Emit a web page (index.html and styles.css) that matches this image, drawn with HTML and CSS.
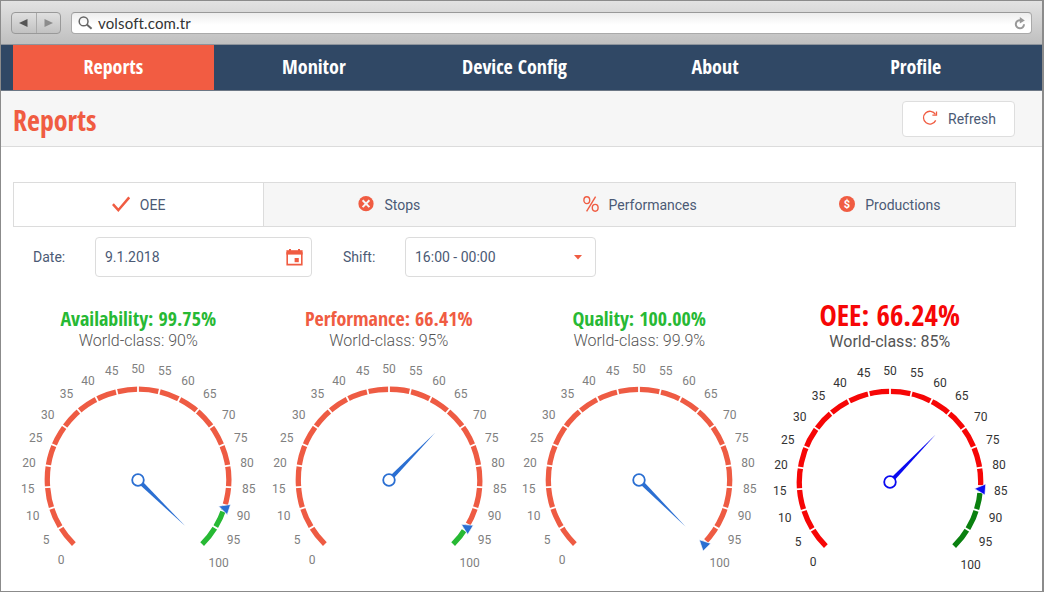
FILE: index.html
```
<!DOCTYPE html>
<html lang="en">
<head>
    <meta charset="UTF-8">
    <title>Reports</title>
    <meta name="viewport" content="width=device-width, initial-scale=1">
    <link rel="stylesheet" href="styles.css">
</head>

<body>
<div class="window">
    <div class="browser-bar">
        <div class="history">
            <span class="history-button"><svg width="9" height="8" viewBox="0 0 9 8"><path d="M0 4L8.5 0V8Z" fill="#555"/></svg></span>
            <span class="history-button"><svg width="9" height="8" viewBox="0 0 9 8"><path d="M9 4L0.5 0V8Z" fill="#8c8c8c"/></svg></span>
        </div>
        <div class="address">
            <svg width="15" height="15" viewBox="0 0 15 15" fill="none" stroke="#666"><circle cx="5.6" cy="5.4" r="4.4" stroke-width="1.5"/><path d="M8.8 8.6L13.6 12.8" stroke-width="2"/></svg>
            <span class="address-text">volsoft.com.tr</span>
            <svg class="reload" width="12" height="13" viewBox="0 0 12 13"><path d="M6.5 3.2A4.1 4.1 0 1 0 10 7.2" fill="none" stroke="#999" stroke-width="2"/><path d="M5.8 0L10.8 3.6L5.8 6.6Z" fill="#999"/></svg>
        </div>
    </div>

    <nav class="main-menu">
        <a class="menu-item active"><span class="condensed">Reports</span></a>
        <a class="menu-item"><span class="condensed">Monitor</span></a>
        <a class="menu-item"><span class="condensed">Device Config</span></a>
        <a class="menu-item"><span class="condensed">About</span></a>
        <a class="menu-item"><span class="condensed">Profile</span></a>
    </nav>

    <header class="page-header">
        <h1 class="condensed">Reports</h1>
        <button type="button" class="refresh">
            <svg width="16" height="16" viewBox="0 0 16 16" fill="none" stroke="#f05c42" stroke-width="1.3"><path d="M13.7 10.4A6.4 6.4 0 1 1 13.4 4.4"/><path d="M14.5 1.6V5.2H10.4"/></svg>
            Refresh
        </button>
    </header>

    <div class="tabs">
        <a class="tab selected">
            <svg width="18" height="18" viewBox="0 0 18 18" fill="none" stroke="#f05c42" stroke-width="2.5"><path d="M0.9 8.2L6.3 14.2L17.2 1.4"/></svg>
            OEE
        </a>
        <a class="tab">
            <svg width="16" height="18" viewBox="0 0 16 18"><circle cx="8" cy="7.7" r="7.6" fill="#f05c42"/><path d="M4.6 4.3L11.4 11.1M11.4 4.3L4.6 11.1" stroke="#f6f6f6" stroke-width="2"/></svg>
            Stops
        </a>
        <a class="tab">
            <svg width="16" height="18" viewBox="0 0 16 18" fill="none" stroke="#f05c42" stroke-width="1.4"><ellipse cx="3.8" cy="4.2" rx="2.9" ry="3.4"/><ellipse cx="12.2" cy="11.8" rx="2.9" ry="3.4"/><path d="M12.6 0.6L3.6 15.4"/></svg>
            Performances
        </a>
        <a class="tab">
            <svg width="16" height="18" viewBox="0 0 16 18"><circle cx="8" cy="8" r="8" fill="#f05c42"/><text class="coin" x="8" y="12" text-anchor="middle">$</text></svg>
            Productions
        </a>
    </div>

    <div class="filters">
        <label class="date-label">Date:</label>
        <div class="field date">
            9.1.2018
            <svg width="17" height="17" viewBox="0 0 17 17"><path d="M1.2 4H15.8V15.6H1.2Z" fill="none" stroke="#f05c42" stroke-width="1.6"/><path d="M0.4 1.2H16.6V5.6H0.4Z" fill="#f05c42"/><path d="M3 0H5V2H3ZM12 0H14V2H12Z" fill="#f05c42"/><path d="M8.6 9H12.8V13.2H8.6Z" fill="#f05c42"/></svg>
        </div>
        <label class="shift-label">Shift:</label>
        <div class="field shift">
            16:00 - 00:00
            <svg width="8" height="5" viewBox="0 0 8 5"><path d="M0 0H8L4 4.5Z" fill="#f05c42"/></svg>
        </div>
    </div>

    <div class="gauges">
        <div class="gauge">
            <h2 class="condensed good">Availability: 99.75%</h2>
            <p>World-class: 90%</p>
            <svg class="dial" data-value="99.75" data-target="90"></svg>
        </div>
        <div class="gauge">
            <h2 class="condensed bad">Performance: 66.41%</h2>
            <p>World-class: 95%</p>
            <svg class="dial" data-value="66.41" data-target="95"></svg>
        </div>
        <div class="gauge">
            <h2 class="condensed good">Quality: 100.00%</h2>
            <p>World-class: 99.9%</p>
            <svg class="dial" data-value="100" data-target="99.9"></svg>
        </div>
        <div class="gauge total">
            <h2 class="condensed">OEE: 66.24%</h2>
            <p>World-class: 85%</p>
            <svg class="dial" data-value="66.24" data-target="85"></svg>
        </div>
    </div>
</div>

<script src="gauges.js"></script>
</body>
</html>
```
FILE: styles.css
```
* {
    box-sizing: border-box;
}
body {
    margin: 0;
    background-color: white;
    color: #4b5a75;
    font-family: Roboto, Arial, sans-serif;
    font-size: 14px;
}
svg {
    display: block;
    flex: none;
}
.condensed {
    font-family: "Open Sans Condensed", "Open Sans", sans-serif;
    font-stretch: 75%;
    font-weight: bold;
    white-space: nowrap;
}
.window {
    width: 1044px;
    height: 592px;
    border: 1px solid #8b8b8b;
    border-right-width: 2px;
    overflow: hidden;
}

/* browser bar */
.browser-bar {
    height: 44px;
    padding: 11px 10px 0 10px;
    display: flex;
    gap: 10px;
    align-items: flex-start;
    background: linear-gradient(#e2e2e2, #bfbfbf);
    border-bottom: 1px solid #8d939b;
}
.history {
    display: flex;
    width: 50px;
    height: 22px;
    border: 1px solid #999;
    border-radius: 4px;
    background: linear-gradient(#e0e0e0, #c2c2c2);
}
.history-button {
    flex: 1;
    display: flex;
    align-items: center;
    justify-content: center;
}
.history-button + .history-button {
    border-left: 1px solid #aaa;
}
.address {
    flex: 1;
    height: 22px;
    padding: 0 5px 0 6px;
    display: flex;
    align-items: center;
    border: 1px solid #aaa;
    border-top-color: #999;
    border-radius: 4px;
    background: linear-gradient(#ededed, white 60%);
}
.address-text {
    margin-left: 5px;
    color: #333;
    font-family: Lato, sans-serif;
    font-size: 15px;
    letter-spacing: 0.15px;
    line-height: 20px;
}
.reload {
    margin-left: auto;
}

/* menu */
.main-menu {
    height: 46px;
    padding-left: 12px;
    padding-right: 26px;
    display: flex;
    background-color: #304865;
    border-bottom: 1px solid #6c7785;
}
.menu-item {
    flex: 1;
    display: flex;
    justify-content: center;
    color: white;
    font-size: 20px;
    line-height: 43px;
}
.menu-item.active {
    background-color: #f25c42;
}

.page-header {
    height: 56px;
    padding: 0 27px 0 12px;
    display: flex;
    align-items: center;
    justify-content: space-between;
    background-color: #f6f6f6;
    border-bottom: 1px solid #dcdcdc;
}
.page-header h1 {
    margin: 3px 0 0 0;
    color: #f05c42;
    font-size: 28px;
    line-height: 36px;
}
.refresh {
    width: 113px;
    height: 36px;
    padding: 0 0 0 19px;
    display: flex;
    align-items: center;
    gap: 10px;
    border: 1px solid #dedede;
    border-radius: 4px;
    background-color: white;
    color: #4b5a75;
    font-family: inherit;
    font-size: 14px;
}
.refresh svg {
    margin-top: -2px;
}

/* tabs */
.tabs {
    height: 45px;
    margin: 35px 26px 0 12px;
    display: grid;
    grid-template-columns: repeat(4, 1fr);
    border: 1px solid #dcdcdc;
    background-color: #f6f6f6;
}
.tab {
    display: flex;
    align-items: center;
    justify-content: center;
    gap: 10px;
}
.tab.selected {
    background-color: white;
    border-right: 1px solid #dcdcdc;
}
.coin {
    fill: white;
    font-size: 11px;
    font-weight: bold;
}

.filters {
    height: 40px;
    margin: 10px 0 0 32px;
    display: flex;
    align-items: center;
}
.date-label {
    width: 62px;
}
.shift-label {
    width: 62px;
    margin-left: 31px;
}
.field {
    height: 40px;
    padding: 0 9px;
    display: flex;
    align-items: center;
    justify-content: space-between;
    border: 1px solid #dcdcdc;
    border-radius: 4px;
}
.date {
    width: 217px;
    padding-right: 8px;
}
.shift {
    width: 191px;
    padding-right: 13px;
}

/* gauges */
.gauges {
    margin: 28px 27px 0 12px;
    display: grid;
    grid-template-columns: repeat(4, 1fr);
    --zone: #ee5b43;
    --zone-good: #27b934;
    --hand: #2b6fd2;
    --tick: #808080;
}
.gauge {
    min-width: 0;
    display: flex;
    flex-direction: column;
    align-items: center;
}
.gauge h2 {
    margin: 0;
    font-size: 20px;
    line-height: 28px;
}
.gauge p {
    margin: -2px 0 -1px 0;
    color: #555;
    font-size: 16px;
    font-weight: 300;
    line-height: 20px;
}
.good {
    color: #27b934;
}
.bad {
    color: #f05c42;
}
.total {
    margin-top: -6px;
    --zone: #f60606;
    --zone-good: #0a800f;
    --hand: #0a0af0;
    --tick: #333;
}
.total h2 {
    color: #f60606;
    font-size: 29px;
    line-height: 32px;
}
.total p {
    margin: 1px 0 0 0;
    color: #555;
    font-weight: 400;
}
.dial {
    width: 250px;
    height: 230px;
}
.zone {
    fill: none;
    stroke: var(--zone);
    stroke-width: 5.3;
}
.zone-good {
    stroke: var(--zone-good);
}
.gap {
    stroke: white;
    stroke-width: 1.8;
}
.hand, .target {
    fill: var(--hand);
}
.target {
    stroke: white;
    stroke-width: 0.6;
}
.hub {
    fill: white;
    stroke: var(--hand);
    stroke-width: 1.8;
}
.tick {
    fill: var(--tick);
    font-size: 12px;
    text-anchor: middle;
}
```
FILE: gauges.js
```
// label centres relative to the middle of the dial, from 0 to 100 in steps of 5
var labels = [
    [-76.7, 79.7], [-91.7, 59.7], [-105, 35], [-110, 8.7], [-108.7, -17.3], [-102, -42.3], [-90, -65.3],
    [-71.3, -86.3], [-49.7, -99.7], [-26, -109.3], [0.3, -111.3], [27, -109.3], [50.3, -99.7], [72, -86.3],
    [91, -65.3], [103, -42.3], [109.3, -17.3], [111, 8.7], [105.7, 35], [95.7, 59.7], [81, 82.7]
];
var radius = 90.7;

function angle(value) {
    return value * 2.7 - 135;
}

function arc(from, to, name) {
    var a = (angle(from) - 90) * Math.PI / 180;
    var b = (angle(to) - 90) * Math.PI / 180;
    var large = (to - from) * 2.7 > 180 ? 1 : 0;
    return '<path class="' + name + '" d="M' + radius * Math.cos(a) + ' ' + radius * Math.sin(a) +
        'A' + radius + ' ' + radius + ' 0 ' + large + ' 1 ' + radius * Math.cos(b) + ' ' + radius * Math.sin(b) + '"/>';
}

for (let dial of document.querySelectorAll('.dial')) {
    let value = Number(dial.dataset.value);
    let target = Number(dial.dataset.target);
    let html = arc(0, target, 'zone') + arc(target, 100, 'zone zone-good');
    for (let i = 1; i < 20; i++) {
        html += '<path class="gap" d="M0 -87V-95" transform="rotate(' + angle(i * 5) + ')"/>';
    }
    // space around the target marker
    html += '<path class="gap" d="M-3 -87V-95M3 -87V-95" transform="rotate(' + angle(target) + ')"/>';
    for (let i = 0; i <= 20; i++) {
        html += '<text class="tick" x="' + (labels[i][0] - 0.3) + '" y="' + (labels[i][1] + 4.5) + '">' + i * 5 + '</text>';
    }
    html += '<path class="target" d="M0 -84.8L5.4 -95.6H-5.4Z" transform="rotate(' + angle(target) + ')"/>';
    html += '<path class="hand" d="M-2.1 -5L0 -66L2.1 -5Z" transform="rotate(' + angle(value) + ')"/>';
    html += '<circle class="hub" r="5.8"/>';
    dial.setAttribute('viewBox', '-125 -130 250 230');
    dial.innerHTML = html;
}
```
